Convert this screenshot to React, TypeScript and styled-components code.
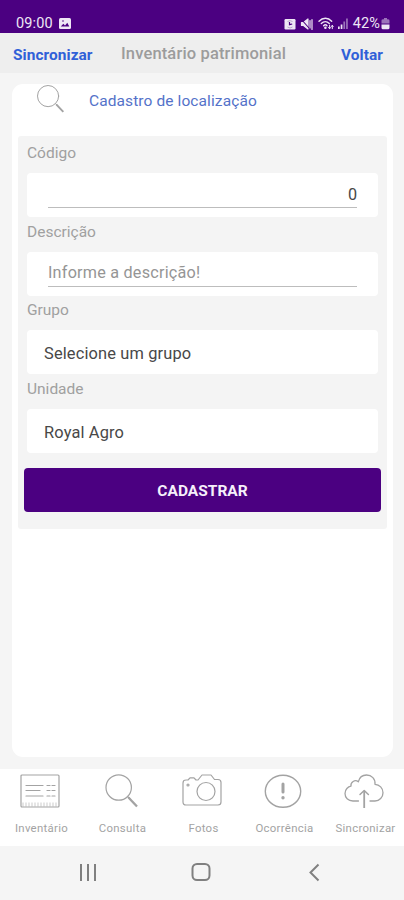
import React from "react";
import styled, { createGlobalStyle } from "styled-components";

const GlobalStyle = createGlobalStyle`
  * { box-sizing: border-box; }
  body { margin: 0; background: #f5f5f5; font-family: Roboto, "Liberation Sans", sans-serif; }
  button, input { font: inherit; border: 0; padding: 0; background: none; }
  svg { display: block; flex: none; }
`;

const Screen = styled.div`
  width: 404px;
  height: 900px;
  display: flex;
  flex-direction: column;
  background: #f5f5f5;
  overflow: hidden;
`;

const StatusBar = styled.div`
  height: 33px;
  flex: none;
  display: flex;
  align-items: center;
  justify-content: space-between;
  padding: 14px 14px 0 16px;
  background: #4b0081;
  color: #eee6f5;
  font-size: 14.5px;
  line-height: 19px;
`;

const StatusGroup = styled.div<{ $gap: number }>`
  display: flex;
  align-items: center;
  gap: ${(p) => p.$gap}px;
`;

const StatusText = styled.span`
  letter-spacing: 0.15px;
`;

const Header = styled.header`
  height: 40px;
  flex: none;
  display: grid;
  grid-template-columns: 108px 1fr 80px;
  align-items: center;
  padding: 4px 21px 0 13px;
  background: #eeeeee;
`;

const HeaderLink = styled.button<{ $end?: boolean }>`
  text-align: ${(p) => (p.$end ? "right" : "left")};
  font-size: 15.4px;
  font-weight: 700;
  line-height: 20px;
  letter-spacing: 0.08px;
  color: #3060d8;
  white-space: nowrap;
`;

const Title = styled.h1`
  margin: -2px 0 0;
  font-size: 16.5px;
  font-weight: 500;
  line-height: 20px;
  letter-spacing: 0.15px;
  color: #9c9c9c;
  white-space: nowrap;
`;

const Card = styled.main`
  flex: none;
  width: 381px;
  height: 673px;
  margin: 11px 0 12px 12px;
  padding: 0 6px;
  border-radius: 11px;
  background: #ffffff;
`;

const CardHeading = styled.div`
  height: 52px;
  display: flex;
  align-items: flex-start;
  gap: 24px;
  padding-left: 17px;
`;

const CardTitle = styled.h2`
  margin: 7px 0 0;
  font-size: 15.5px;
  font-weight: 400;
  line-height: 20px;
  letter-spacing: 0.1px;
  color: #5472c9;
  white-space: nowrap;
`;

const Form = styled.form`
  height: 393px;
  padding: 0 6px;
  border-radius: 3px;
  background: #f4f4f4;
`;

const Field = styled.div`
  height: 78.7px;
  padding: 7px 3px 0;
`;

const Label = styled.label`
  display: block;
  height: 30px;
  font-size: 15.5px;
  line-height: 21px;
  color: #a0a0a0;
`;

const InputBox = styled.div`
  height: 44px;
  padding: 9px 21px 0;
  border-radius: 4px;
  background: #ffffff;
`;

const TextInput = styled.input<{ $end?: boolean }>`
  display: block;
  width: 100%;
  height: 26px;
  padding-bottom: 1px;
  border-bottom: 1.5px solid #bdbdbd;
  outline: none;
  border-radius: 0;
  font-size: 16.2px;
  letter-spacing: ${(p) => (p.$end ? "0" : "0.22px")};
  text-align: ${(p) => (p.$end ? "right" : "left")};
  color: #484848;
  &::placeholder { color: #959595; opacity: 1; }
`;

const SelectBox = styled.div`
  height: 44px;
  display: flex;
  align-items: center;
  padding: 3px 18px 0 17px;
  border-radius: 4px;
  background: #ffffff;
  font-size: 16.4px;
  letter-spacing: 0.15px;
  color: #484848;
`;

const SubmitButton = styled.button`
  display: block;
  width: 357px;
  height: 44px;
  margin-top: 17.4px;
  padding-top: 2px;
  border-radius: 4px;
  background: #4b0081;
  color: #f6effb;
  font-size: 15.5px;
  font-weight: 700;
`;

const TabBar = styled.nav`
  height: 77px;
  flex: none;
  display: grid;
  grid-template-columns: repeat(5, 81px);
  padding: 4px 0 0 1px;
  background: #ffffff;
`;

const Tab = styled.div`
  display: flex;
  flex-direction: column;
  align-items: center;
  gap: 11px;
  color: #a3a3a3;
  font-size: 11.4px;
  line-height: 16px;
  letter-spacing: 0.3px;

  svg { margin-right: 3px; }
`;

const SystemNav = styled.div`
  flex: 1;
  display: flex;
  align-items: flex-start;
  padding: 17px 0 0 78px;
  gap: 93px;
`;

const line = { fill: "none", stroke: "currentColor", strokeLinecap: "round", strokeLinejoin: "round" } as const;

const Magnifier = ({ size = 36 }: { size?: number }) => (
  <svg width={size} height={size} viewBox="0 0 36 36" {...line} strokeWidth="1.2">
    <circle cx="15.7" cy="14.5" r="12.7" />
    <path d="M24.5 23.5l3 3" />
    <path d="M25.5 24.500L34 33.500" strokeWidth="2.3" strokeLinecap="butt" />
  </svg>
);

const PictureIcon = () => (
  <svg width="12" height="11" viewBox="0 0 12 11">
    <rect width="12" height="11" rx="1.5" fill="#eee6f5" />
    <path d="M1.8 8.6L4.3 5.7 6 7.4 8.3 4.7l2 3.9z" fill="#4b0081" />
    <circle cx="4" cy="3" r=".8" fill="#4b0081" />
  </svg>
);

const AlarmIcon = () => (
  <svg width="12" height="12" viewBox="0 0 12 12">
    <rect x=".5" y="1" width="11" height="10.5" rx="1.2" fill="#eee6f5" />
    <path d="M3.500 3.500Q6 1.800 8.500 3.500M3.500 9Q6 11 8.500 9" fill="none" stroke="#a995bd" strokeWidth=".8" />
    <path d="M5.500 4v2.7l2.700-.7" fill="none" stroke="#4b0081" strokeWidth="1.2" />
  </svg>
);

const MuteIcon = () => (
  <svg width="13" height="12" viewBox="0 0 13 12" {...line} strokeWidth="1.2">
    <path d="M1.5 4.5h2L8 1v10L3.5 7.5h-2z" fill="currentColor" />
    <path d="M10 2.500v7.500M12 1.500v10" />
    <path d="M1 1l8 9" stroke="#4b0081" strokeWidth="1.1" />
  </svg>
);

const WifiIcon = () => (
  <svg width="16" height="13" viewBox="0 0 16 13" {...line} strokeWidth="1.4">
    <path d="M1 4.2c3.8-4 9-4 12.7 0M3.3 6.5c2.4-2.5 5.6-2.5 8 0M5.6 8.7c1.2-1.2 2.4-1.2 3.4 0" />
    <circle cx="7.4" cy="10.8" r=".6" fill="currentColor" />
    <path d="M11.6 8.2v3.5M10.5 10.5l1.1 1.3 1-1.3M14.3 11.7V8.4M13.4 9.5l.9-1.2.9 1.2" strokeWidth="1" />
  </svg>
);

const SignalIcon = () => (
  <svg width="10" height="11" viewBox="0 0 10 11" fill="currentColor">
    <path d="M0 8.5h1.7V11H0zM2.7 6.5h1.7V11H2.7z" />
    <path d="M5.4 3.5h1.7V11H5.4zM8.1.5h1.7V11H8.1z" opacity=".5" />
  </svg>
);

const BatteryIcon = () => (
  <svg width="9" height="13" viewBox="0 0 9 13" fill="currentColor">
    <path d="M3 1h3v1.2h1A1.5 1.5 0 018.5 4v2.500h-8V4A1.5 1.5 0 012 2.200h1z" opacity=".5" />
    <path d="M.5 7.500h8v3.3A1.5 1.5 0 017 12.3H2A1.5 1.5 0 01.5 10.8z" />
  </svg>
);

const InventoryIcon = () => (
  <svg width="40" height="36" viewBox="0 0 40 36" {...line} strokeWidth="1.2">
    <rect x="1" y="2" width="38" height="32" rx="1" />
    <path d="M6 12.5h17M6 17.5h14M6 23h17M27 12.5h3M32 12.5h3M27 17.5h3M32 17.5h3M27 23h3M32 23h3" />
    <path d="M2.5 31.5h36" strokeWidth="4" strokeDasharray="1 2" strokeLinecap="butt" opacity=".55" />
  </svg>
);

const CameraIcon = () => (
  <svg width="40" height="36" viewBox="0 0 40 36" {...line} strokeWidth="1.2">
    <path d="M4 7h2l2-2.2h4L14 7h2l4-5h9l3.5 4.5H36q3 0 3 3V29q0 3-3 3H4q-3 0-3-3V10q0-3 3-3z" />
    <circle cx="24" cy="18.5" r="9" />
    <circle cx="6" cy="12" r="1" />
  </svg>
);

const AlertIcon = () => (
  <svg width="38" height="36" viewBox="0 0 38 36" {...line} strokeWidth="1.4">
    <ellipse cx="19" cy="18.3" rx="17.7" ry="16" />
    <path d="M19 11v8" strokeWidth="3" />
    <circle cx="19" cy="24.7" r="1" fill="currentColor" />
  </svg>
);

const CloudIcon = () => (
  <svg width="40" height="36" viewBox="0 0 40 36" {...line} strokeWidth="1.3">
    <path d="M14.5 28H9C4 28 1 24.5 1 20.5c0-4 3-6.8 6-7.3-.7-4 4-7.2 7.3-4.4C15.5 4.2 19 2 22.5 2c5.2 0 9 4 8.5 9.3 4.5.2 8 4 8 8.4S35.5 28 31 28h-5" />
    <path d="M20.2 35V18" strokeWidth="1.8" strokeLinecap="butt" />
    <path d="M16 21.5l4.2-4 4.2 4" strokeWidth="1.5" />
  </svg>
);

const RecentsIcon = () => (
  <svg width="20" height="20" viewBox="0 0 20 20" fill="none" stroke="#808080" strokeWidth="2">
    <path d="M3 1v17M10 1v17M17 1v17" />
  </svg>
);

const HomeIcon = () => (
  <svg width="20" height="20" viewBox="0 0 20 20" fill="none" stroke="#808080" strokeWidth="2">
    <rect x="1.5" y="1" width="17" height="16" rx="4.5" />
  </svg>
);

const BackIcon = () => (
  <svg width="20" height="20" viewBox="0 0 20 20" fill="none" stroke="#808080" strokeWidth="2">
    <path d="M14.5 1.5l-8 8 8 8" />
  </svg>
);

const HeadingIcon = styled.span`
  display: block;
  color: #a3a3a3;
`;

const tabs = [
  { name: "Inventário", icon: <InventoryIcon /> },
  { name: "Consulta", icon: <Magnifier /> },
  { name: "Fotos", icon: <CameraIcon /> },
  { name: "Ocorrência", icon: <AlertIcon /> },
  { name: "Sincronizar", icon: <CloudIcon /> },
];

export default function App() {
  return (
    <>
      <GlobalStyle />
      <Screen>
        <StatusBar>
          <StatusGroup $gap={6}>
            <StatusText>09:00</StatusText>
            <PictureIcon />
          </StatusGroup>
          <StatusGroup $gap={4.5}>
            <AlarmIcon />
            <MuteIcon />
            <WifiIcon />
            <SignalIcon />
            <StatusGroup $gap={1}>
              <StatusText>42%</StatusText>
              <BatteryIcon />
            </StatusGroup>
          </StatusGroup>
        </StatusBar>
        <Header>
          <HeaderLink>Sincronizar</HeaderLink>
          <Title>Inventário patrimonial</Title>
          <HeaderLink $end>Voltar</HeaderLink>
        </Header>
        <Card>
          <CardHeading>
            <HeadingIcon>
              <Magnifier size={30} />
            </HeadingIcon>
            <CardTitle>Cadastro de localização</CardTitle>
          </CardHeading>
          <Form>
            <Field>
              <Label>Código</Label>
              <InputBox>
                <TextInput $end defaultValue="0" />
              </InputBox>
            </Field>
            <Field>
              <Label>Descrição</Label>
              <InputBox>
                <TextInput placeholder="Informe a descrição!" />
              </InputBox>
            </Field>
            <Field>
              <Label>Grupo</Label>
              <SelectBox>Selecione um grupo</SelectBox>
            </Field>
            <Field>
              <Label>Unidade</Label>
              <SelectBox>Royal Agro</SelectBox>
            </Field>
            <SubmitButton type="button">CADASTRAR</SubmitButton>
          </Form>
        </Card>
        <TabBar>
          {tabs.map((tab) => (
            <Tab key={tab.name}>
              {tab.icon}
              {tab.name}
            </Tab>
          ))}
        </TabBar>
        <SystemNav>
          <RecentsIcon />
          <HomeIcon />
          <BackIcon />
        </SystemNav>
      </Screen>
    </>
  );
}
